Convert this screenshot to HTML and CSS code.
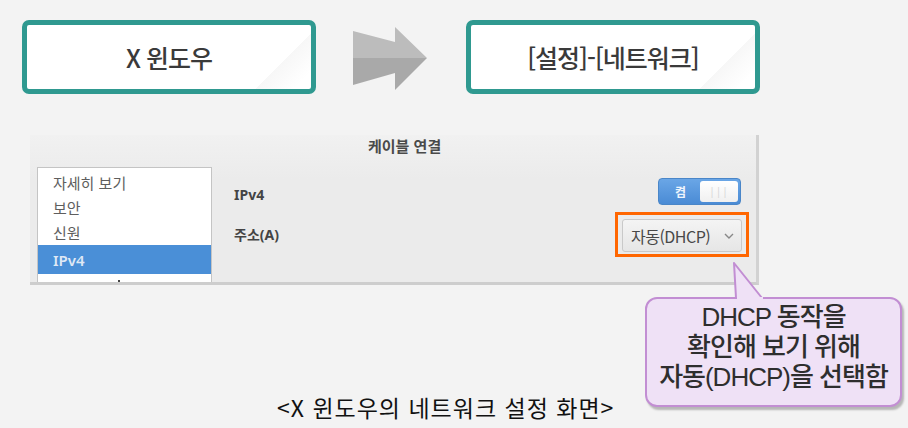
FILE: index.html
```html
<!DOCTYPE html>
<html lang="ko">
<head>
    <meta charset="UTF-8">
    <meta name="viewport" content="width=device-width, initial-scale=1.0">
    <title>X 윈도우의 네트워크 설정 화면</title>
    <link rel="stylesheet" href="styles.css">
</head>
<body>
    <div class="stage">
        <div class="steps">
            <div class="step-box">X 윈도우</div>
            <svg class="step-arrow" width="74" height="64" viewBox="0 0 74 64">
                <polygon points="0,4 42,15 42,0 74,31 0,31" fill="#bcbcbc"/>
                <polygon points="0,31 74,31 42,63 42,46 0,58" fill="#a9a9a9"/>
            </svg>
            <div class="step-box">[설정]-[네트워크]</div>
        </div>

        <div class="panel">
            <div class="panel-title">케이블 연결</div>
            <div class="panel-body">
                <ul class="side-list">
                    <li>자세히 보기</li>
                    <li>보안</li>
                    <li>신원</li>
                    <li class="selected">IPv4</li>
                    <li class="more"><span class="dot"></span></li>
                </ul>
                <div class="settings">
                    <div class="row">
                        <span class="label">IPv4</span>
                        <div class="toggle">
                            <span class="toggle-on">켬</span>
                            <span class="toggle-knob">|||</span>
                        </div>
                    </div>
                    <div class="row">
                        <span class="label">주소(A)</span>
                        <div class="highlight">
                            <div class="dropdown">자동(DHCP)
                                <svg width="10" height="6" viewBox="0 0 10 6"><polyline points="1,1 5,5 9,1" fill="none" stroke="#888" stroke-width="1.4"/></svg>
                            </div>
                        </div>
                    </div>
                </div>
            </div>
        </div>

        <p class="caption">&lt;X 윈도우의 네트워크 설정 화면&gt;</p>

        <div class="callout">
            <svg class="callout-tail" width="40" height="38" viewBox="0 0 40 38">
                <polygon points="7,1 9,36 35,36" fill="#efe1f6" stroke="#c28ed3" stroke-width="2" stroke-linejoin="round"/>
                <rect x="10" y="35" width="26" height="4" fill="#efe1f6"/>
            </svg>
            <div class="callout-line">DHCP 동작을</div>
            <div class="callout-line">확인해 보기 위해</div>
            <div class="callout-line">자동(DHCP)을 선택함</div>
        </div>
    </div>
</body>
</html>
```

FILE: styles.css
```css
body {
    margin: 0;
    background-color: #f3f3f3;
    font-family: "Noto Sans", "Noto Sans CJK KR", sans-serif;
}

.stage {
    position: relative;
    width: 908px;
    height: 428px;
    overflow: hidden;
}

.steps {
    display: flex;
    align-items: center;
    padding: 20px 0 0 22px;
}

.step-box {
    box-sizing: border-box;
    width: 294px;
    height: 74px;
    border: 5px solid #2f9990;
    border-radius: 7px;
    background: linear-gradient(135deg, #ffffff 84%, #f7f7f7 84%, #ffffff 95%);
    display: flex;
    align-items: center;
    justify-content: center;
    font-family: "Noto Sans CJK KR", sans-serif;
    font-size: 25px;
    font-weight: 500;
    letter-spacing: -1px;
    color: #3a3a3a;
}

.step-arrow {
    margin: 3px 39px 0 37px;
}

.panel {
    box-sizing: border-box;
    margin: 41px 0 0 30px;
    width: 729px;
    height: 150px;
    background: linear-gradient(#f1f1f1, #ebebeb 30%);
    border-right: 3px solid #d2d2d2;
    border-bottom: 3px solid #cdcdcd;
    display: flex;
    flex-direction: column;
}

.panel-title {
    height: 33px;
    padding-left: 338px;
    font-family: "Noto Sans CJK KR", sans-serif;
    font-size: 15px;
    font-weight: 700;
    color: #4a4a4a;
    line-height: 21px;
}

.panel-body {
    flex: 1;
    display: flex;
}

.side-list {
    list-style: none;
    margin: 0 0 0 7px;
    padding: 2px 0 0;
    width: 175px;
    box-sizing: border-box;
    background-color: #fff;
    border: 1px solid #c4c4c4;
    border-bottom: none;
    font-family: "Noto Sans CJK KR", sans-serif;
    font-size: 15px;
    color: #5e5e5e;
}

.side-list li {
    height: 25px;
    line-height: 25px;
    padding-left: 15px;
}

.side-list li.selected {
    height: 29px;
    line-height: 31px;
    background-color: #4a8fd7;
    color: #dfe8f5;
    font-family: "Noto Sans", sans-serif;
    font-weight: 600;
}

.side-list li.more {
    height: 8px;
    position: relative;
}

.dot {
    position: absolute;
    left: 80px;
    bottom: 0;
    width: 2px;
    height: 2px;
    background-color: #444;
}

.settings {
    flex: 1;
    padding: 11px 7px 0 22px;
}

.row {
    display: flex;
    align-items: center;
    justify-content: space-between;
}

.row:first-child {
    padding-right: 8px;
}

.label {
    padding-top: 5px;
    font-family: "Noto Sans", "Noto Sans CJK KR", sans-serif;
    font-size: 14px;
    font-weight: 700;
    color: #444;
}

.toggle {
    display: flex;
    box-sizing: border-box;
    width: 83px;
    height: 27px;
    padding: 2px;
    border-radius: 4px;
    background: linear-gradient(#6aa6e6, #4a8bd5);
    border: 1px solid #4a86c8;
}

.toggle-on {
    width: 39px;
    text-align: center;
    font-family: "Noto Sans CJK KR", sans-serif;
    font-size: 12px;
    font-weight: 700;
    color: #eef4fc;
    line-height: 21px;
}

.toggle-knob {
    flex: 1;
    border-radius: 3px;
    background: linear-gradient(#ffffff, #f0f0f0);
    text-align: center;
    font-size: 10px;
    color: #d6d6d6;
    line-height: 21px;
    letter-spacing: 1px;
}

.highlight {
    margin-top: 7px;
    padding: 4px 4px 2px 4px;
    border: 3px solid #ff6600;
}

.dropdown {
    box-sizing: border-box;
    width: 120px;
    height: 33px;
    padding: 0 7px 0 8px;
    display: flex;
    align-items: center;
    justify-content: space-between;
    border: 1px solid #c9c9c9;
    border-radius: 3px;
    background: linear-gradient(#f4f4f4, #e6e6e6);
    font-family: "Noto Sans CJK KR", sans-serif;
    font-size: 16px;
    letter-spacing: -0.5px;
    color: #484848;
}

.caption {
    margin: 110px 0 0 277px;
    font-family: "Noto Sans CJK KR", sans-serif;
    font-size: 23px;
    letter-spacing: 1px;
    color: #111;
    line-height: 24px;
}

.callout {
    position: absolute;
    left: 645px;
    top: 297px;
    box-sizing: border-box;
    width: 257px;
    height: 110px;
    padding-top: 3px;
    border: 2px solid #c28ed3;
    border-radius: 12px;
    background-color: #efe1f6;
    box-shadow: 2px 3px 2px rgba(0, 0, 0, 0.25);
    text-align: center;
    font-family: "Liberation Sans", "Noto Sans CJK KR", sans-serif;
    font-size: 26px;
    font-weight: 500;
    letter-spacing: -1px;
    color: #2e2e2e;
}

.callout-line {
    height: 30px;
    line-height: 30px;
}

.callout-tail {
    position: absolute;
    left: 80px;
    top: -37px;
}
```
